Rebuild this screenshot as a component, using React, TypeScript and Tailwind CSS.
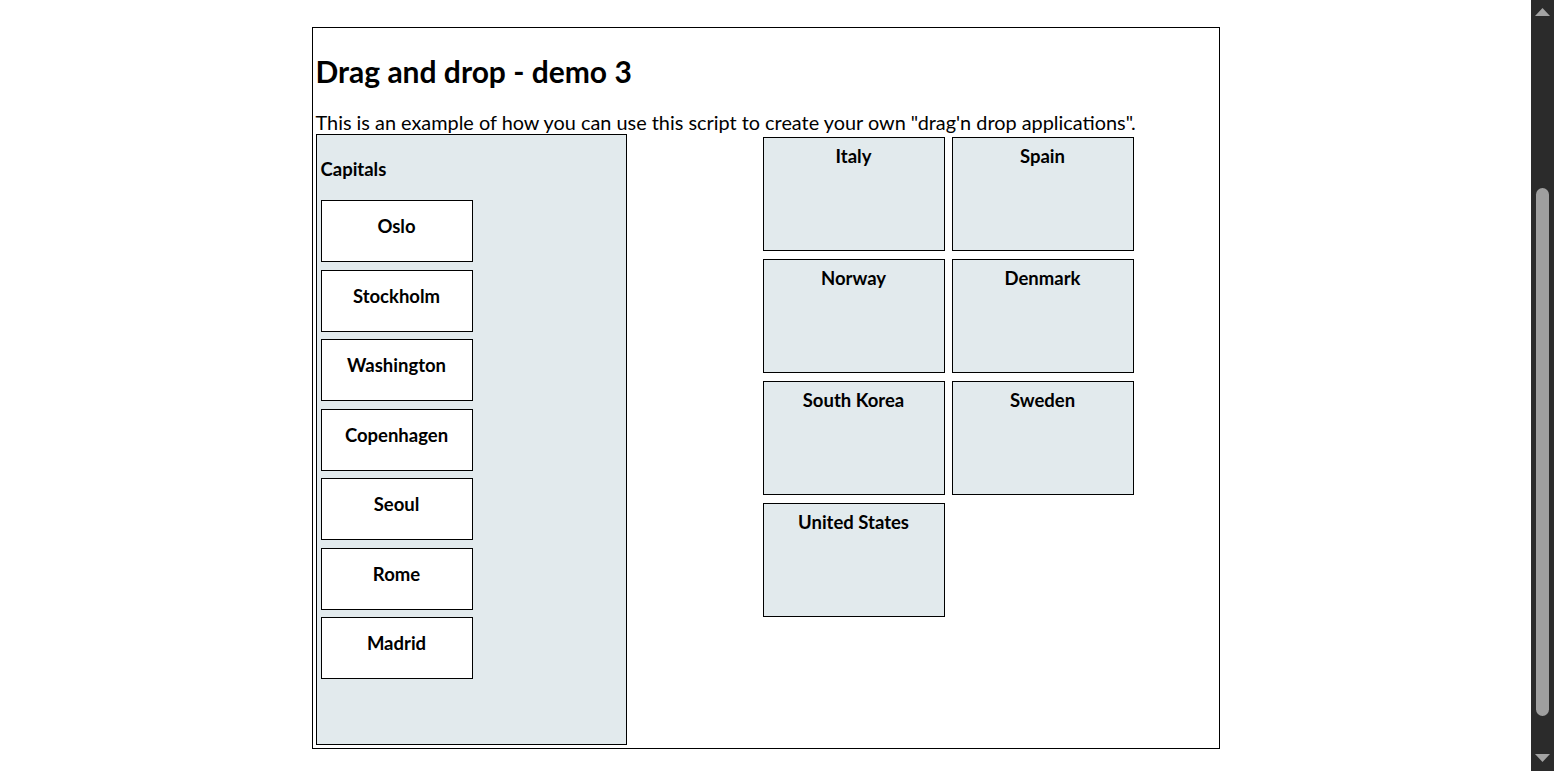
import React from 'react'

const capitals = ['Oslo', 'Stockholm', 'Washington', 'Copenhagen', 'Seoul', 'Rome', 'Madrid']
const countries = ['Italy', 'Spain', 'Norway', 'Denmark', 'South Korea', 'Sweden', 'United States']

function Scrollbar() {
  return (
    <div className="w-[23px] h-[771px] shrink-0 bg-[#2b2b2b] flex flex-col items-center">
      <svg className="mt-[8px]" width="15" height="8" viewBox="0 0 15 8">
        <polygon points="7.5,0 15,8 0,8" fill="#a3a3a3" />
      </svg>
      {/* thumb sits at the bottom: page is scrolled */}
      <div className="mt-[172px] w-[13px] h-[528px] rounded-full bg-[#9f9f9f]" />
      <div className="flex-1" />
      <svg className="mb-[9px]" width="15" height="8" viewBox="0 0 15 8">
        <polygon points="0,0 15,0 7.5,8" fill="#a3a3a3" />
      </svg>
    </div>
  )
}

export default function App() {
  return (
    <div className="flex h-[771px] overflow-hidden bg-white text-black font-['Lato',sans-serif]">
      <div className="flex-1">
        <div className="mx-auto mt-[27px] w-[908px] h-[722px] border border-black px-[3px]">
          <h2 className="mt-[27px] text-[30px] leading-[32px] font-bold">Drag and drop - demo 3</h2>
          <p className="mt-[24px] text-[19.88px] leading-[23px]">
            This is an example of how you can use this script to create your own "drag'n drop applications".
          </p>

          <div className="flex items-start">
            {/* Capitals list */}
            <div className="w-[311px] h-[611px] shrink-0 border border-black bg-[#e2eaed] px-[4px] pt-[23px]">
              <div className="text-[18.5px] leading-[22px] font-bold">Capitals</div>
              <div className="mt-[20px] flex flex-col gap-[7.5px]">
                {capitals.map((c) => (
                  <div
                    key={c}
                    className="w-[152px] h-[62px] border border-black bg-white pt-[14px] text-center text-[18.5px] leading-[22px] font-bold"
                  >
                    {c}
                  </div>
                ))}
              </div>
            </div>

            {/* Drop targets */}
            <div className="ml-[136px] mt-[3px] grid grid-cols-[182px_182px] gap-x-[7px] gap-y-[8px]">
              {countries.map((c) => (
                <div
                  key={c}
                  className="h-[114px] border border-black bg-[#e2eaed] pt-[7px] text-center text-[18.5px] leading-[22px] font-bold"
                >
                  {c}
                </div>
              ))}
            </div>
          </div>
        </div>
      </div>
      <Scrollbar />
    </div>
  )
}
